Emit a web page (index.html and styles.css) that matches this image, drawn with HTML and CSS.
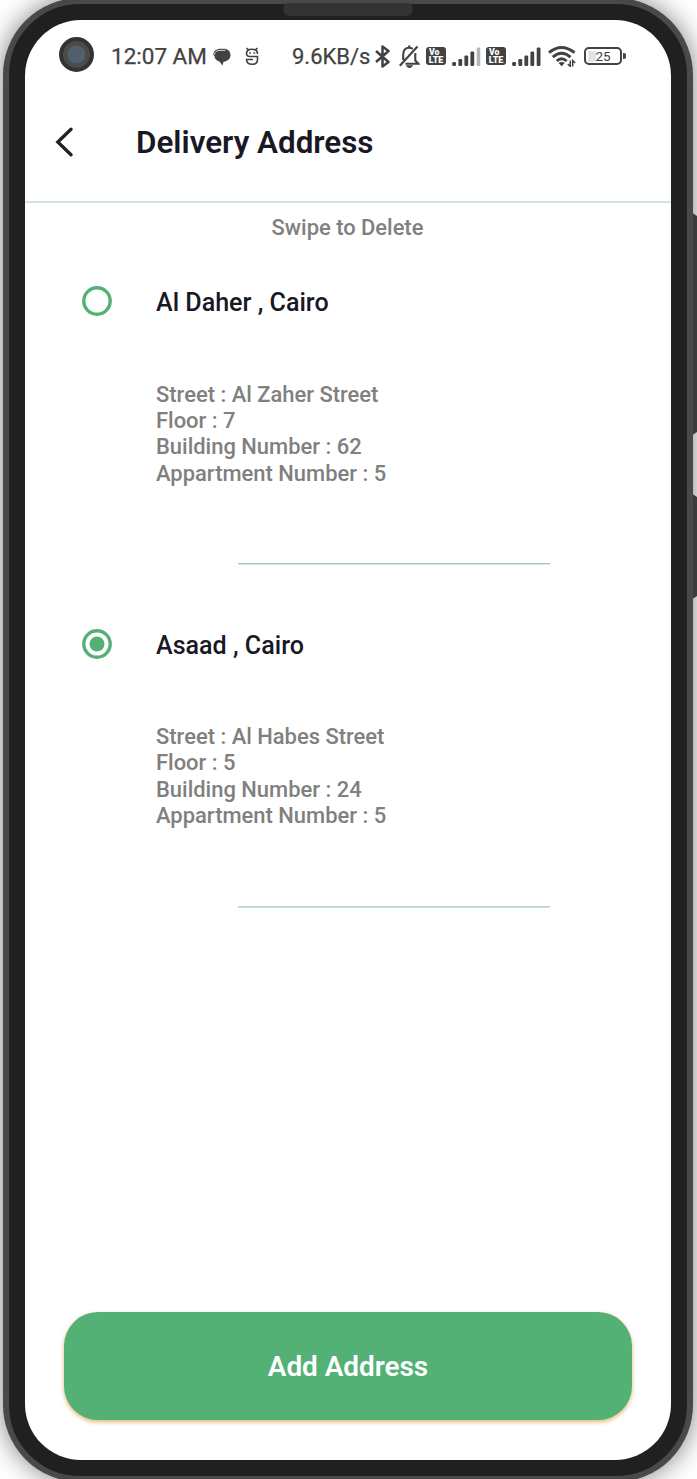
FILE: index.html
```html
<!DOCTYPE html>
<html lang="en">
<head>
<meta charset="utf-8">
<title>Delivery Address</title>
<link rel="stylesheet" href="styles.css">
</head>
<body>
<div class="stage">
  <i class="side-key side-key-volume"></i>
  <i class="side-key side-key-power"></i>
  <div class="phone">
    <i class="speaker"></i>
    <main class="screen">
      <div class="status">
        <i class="camera"></i>
        <span class="clock">12:07 AM</span>
        <svg class="ic-chat" width="18" height="18" viewBox="0 0 18 18"><path d="M.3 7C.3 3 3.500.8 7.500.8h3c4.500 0 7 2.600 7 6.200S15 13.200 10.500 13.800L9.500 17.500 6.500 13.500C4 12.800 1.500 11 1.500 8Z" fill="#424242"/><path d="M1.300 6.800C1.600 3.500 4 2.300 8 2.300h4.500" fill="none" stroke="#fff" stroke-width=".8"/></svg>
        <svg class="ic-face" width="14" height="19" viewBox="0 0 14 19" fill="none" stroke="#424242" stroke-width="1.600"><path d="M1.500 1l2 1.800M12.500 1l-2 1.800M12.500 7C12.500 4 10.800 2.200 7 2.200S1.500 4 1.500 6.500 3 9.500 5 9.500h7.500v3c0 3-2 4.800-5.500 4.800s-5.500-1.700-5.500-4.800H8"/><path d="M4.200 6h1.700M8.500 6h1.700"/></svg>
        <span class="speed">9.6KB/s</span>
        <svg class="ic-bt" width="15" height="23" viewBox="0 0 15 23" fill="none" stroke="#424242" stroke-width="2.500" stroke-linejoin="round"><path d="M1 6l12.500 11-6 4.500v-20l6 4.500L1 17"/></svg>
        <svg class="ic-bell" width="21" height="23" viewBox="0 0 21 23" fill="none" stroke="#424242" stroke-width="2.100"><path d="M.8 20.800L18.500 1.500M4.200 15V9.500C4.200 5 6.500 2.800 10 2.800c1.500 0 2.700.4 3.700 1.200M16.300 8v7.500l3 3.200H6.500"/><path d="M10.200.5v2.500"/><path d="M7 20.300h7C13.500 22.300 12 23 10.500 23S7.500 22.300 7 20.300Z" fill="#424242" stroke="none"/></svg>
        <svg class="ic-volte" width="20" height="18" viewBox="0 0 20 18"><rect width="20" height="18" rx="3" fill="#424242"/><text class="volte" x="3" y="8.200" textLength="10.500" lengthAdjust="spacingAndGlyphs">Vo</text><text class="volte" x="2.800" y="15.700" textLength="14.500" lengthAdjust="spacingAndGlyphs">LTE</text></svg>
        <svg class="ic-bars" width="29" height="19" viewBox="0 0 29 19" fill="#424242"><rect x=".2" y="15" width="3.800" height="4" rx="1.200"/><rect x="6.400" y="12" width="3.800" height="7" rx="1.200"/><rect x="12.400" y="8.500" width="3.800" height="10.500" rx="1.200"/><rect x="18.400" y="4.500" width="3.800" height="14.500" rx="1.200"/><rect x="24.700" y=".5" width="3.600" height="18.500" rx="1.200" fill="#b5b5b5"/></svg>
        <svg class="ic-volte-2" width="20" height="18" viewBox="0 0 20 18"><rect width="20" height="18" rx="3" fill="#424242"/><text class="volte" x="3" y="8.200" textLength="10.500" lengthAdjust="spacingAndGlyphs">Vo</text><text class="volte" x="2.800" y="15.700" textLength="14.500" lengthAdjust="spacingAndGlyphs">LTE</text></svg>
        <svg class="ic-bars-2" width="29" height="19" viewBox="0 0 29 19" fill="#424242"><rect x=".2" y="15" width="3.800" height="4" rx="1.200"/><rect x="6.400" y="12" width="3.800" height="7" rx="1.200"/><rect x="12.400" y="8.500" width="3.800" height="10.500" rx="1.200"/><rect x="18.400" y="4.500" width="3.800" height="14.500" rx="1.200"/><rect x="24.700" y=".5" width="3.800" height="18.500" rx="1.200"/></svg>
        <svg class="ic-wifi" width="28" height="21" viewBox="0 0 28 21" fill="none" stroke="#424242" stroke-width="2.900"><path d="M1 6.700Q13.500-3.600 26.500 6.700M4.800 11.200Q13.500 3.400 22.500 11.200M8.800 15Q13.500 10.700 18.700 15"/><path d="M10.500 17Q13.700 15.200 16.800 17L13.700 20.200Z" fill="#424242" stroke="none"/><path d="M22.300 14.500v6l-2.500-2.500M24.700 20.500v-6l2.500 2.500" stroke-width="1.500"/></svg>
        <span class="battery"><span class="battery-text">25</span></span><i class="battery-tip"></i>
      </div>
      <header class="header">
        <svg class="back" width="18" height="30" viewBox="0 0 18 30" fill="none" stroke="#202124" stroke-width="3.300"><path d="M16 2.200L2.800 15 16 27.800" stroke-linecap="round"/></svg>
        <h1 class="title">Delivery Address</h1>
      </header>
      <p class="hint">Swipe to Delete</p>
      <section class="address">
        <svg class="radio" width="30" height="30" viewBox="0 0 30 30"><circle cx="15" cy="15" r="13.200" fill="none" stroke="#54b175" stroke-width="3.400"/></svg>
        <div class="info">
          <h2 class="place">Al Daher , Cairo</h2>
          <p class="lines">Street : Al Zaher Street<br>Floor : 7<br>Building Number : 62<br>Appartment Number : 5</p>
          <i class="rule"></i>
        </div>
      </section>
      <section class="address">
        <svg class="radio" width="30" height="30" viewBox="0 0 30 30"><circle cx="15" cy="15" r="13.200" fill="none" stroke="#54b175" stroke-width="3.400"/><circle cx="15" cy="15" r="7.500" fill="#54b175"/></svg>
        <div class="info">
          <h2 class="place">Asaad , Cairo</h2>
          <p class="lines">Street : Al Habes Street<br>Floor : 5<br>Building Number : 24<br>Appartment Number : 5</p>
          <i class="rule rule-soft"></i>
        </div>
      </section>
      <button class="add">Add Address</button>
    </main>
  </div>
</div>
</body>
</html>
```
FILE: styles.css
```css
* { box-sizing: border-box; }
body { margin: 0; background: #fff; font-family: Roboto, sans-serif; }
.stage { position: relative; width: 697px; height: 1479px; overflow: hidden; }
.phone {
  position: relative;
  width: 690px;
  height: 1484px;
  margin: -2px 0 0 3px;
  padding: 16px;
  border: 6px solid #494949;
  border-radius: 77px;
  background: #202020;
  box-shadow: 0 0 26px rgba(0, 0, 0, .5);
}
.speaker { position: absolute; left: 274px; top: -1px; width: 130px; height: 13px; border-radius: 6.5px; background: #333; }
.side-key { position: absolute; z-index: 1; left: 692.5px; width: 6px; background: #3b3b3b; clip-path: polygon(0 0, 100% 4px, 100% calc(100% - 4px), 0 100%); }
.side-key-volume { top: 213px; height: 222px; }
.side-key-power { top: 494px; height: 105px; }
.screen { display: flex; flex-direction: column; width: 646px; height: 1440px; border-radius: 56px; background: #fff; overflow: hidden; }

.status { display: flex; align-items: center; height: 63px; padding: 10px 0 0 34px; color: #424242; font-size: 22px; line-height: 26px; flex: none; }
.status > * { flex: none; }
.camera { width: 35px; height: 35px; margin: -4px 17px 0 0; border: 4px solid #333; border-radius: 50%; background: radial-gradient(circle, #50606e 8.700px, #4b4b4b 9.200px); }
.clock { width: 95px; margin: -1px 7px 0 0; font-size: 22.500px; white-space: nowrap; -webkit-text-stroke: .25px #424242; }
.ic-chat { margin: 0 14px 0 0; }
.ic-face { margin-right: 33px; }
.speed { width: 78px; margin-right: 5px; white-space: nowrap; -webkit-text-stroke: .25px #424242; }
.ic-bt { margin-right: 9px; }
.ic-bell { margin-right: 6px; }
.ic-volte, .ic-volte-2 { margin: -1px 6px 0 0; }
.ic-bars { margin-right: 5px; }
.ic-bars-2 { margin-right: 7px; }
.ic-wifi { margin-right: 8px; }
.volte { fill: #fff; font: 900 8.500px Roboto, sans-serif; }
.battery { display: flex; align-items: center; justify-content: center; width: 38px; height: 18px; margin-top: -1px; border: 2px solid #424242; border-radius: 5px; background: linear-gradient(#e3e3e3, #e3e3e3) 2px 1.500px / 8px 11px no-repeat; }
.battery-text { font-size: 13.500px; line-height: 16px; }
.battery-tip { width: 2.500px; height: 6px; margin: -1px 0 0 1px; border-radius: 0 2px 2px 0; background: #424242; }

.header { display: flex; align-items: center; height: 120px; padding-left: 30px; border-bottom: 2px solid #cfe7da; flex: none; }
.back { margin-right: 63px; }
.title { margin: 2px 0 0; color: #191825; font-size: 31.400px; line-height: 38px; font-weight: 600; white-space: nowrap; }
.hint { margin: 12px 1px 0 0; text-align: center; color: #808080; font-size: 21.900px; line-height: 26px; font-weight: 500; }
.address { display: flex; height: 342.500px; padding: 45px 0 0 57px; flex: none; }
.radio { margin-right: 44px; flex: none; }
.info { display: flex; flex-direction: column; }
.place { margin: 2px 0 0; color: #191825; font-size: 25.100px; line-height: 30px; font-weight: 500; white-space: nowrap; }
.lines { margin: 63.500px 0 0; color: #808080; font-size: 21.950px; line-height: 26.400px; font-weight: 500; white-space: nowrap; }
.rule { width: 312px; height: 2px; margin: 76px 0 0 82px; background: linear-gradient(#9dceb0 50%, #d7eadf 50%); }
.rule-soft { background: linear-gradient(#b8d8cb 50%, #cfe2da 50%); }
.add { width: 568px; height: 108px; margin: auto auto 40px 39px; padding: 2px 0 0; border: 0; border-radius: 34px; background: #54b175; box-shadow: 0 2px 4px rgba(205, 132, 25, .6); color: #fff; font: 600 27.900px/34px Roboto, sans-serif; flex: none; }
```
